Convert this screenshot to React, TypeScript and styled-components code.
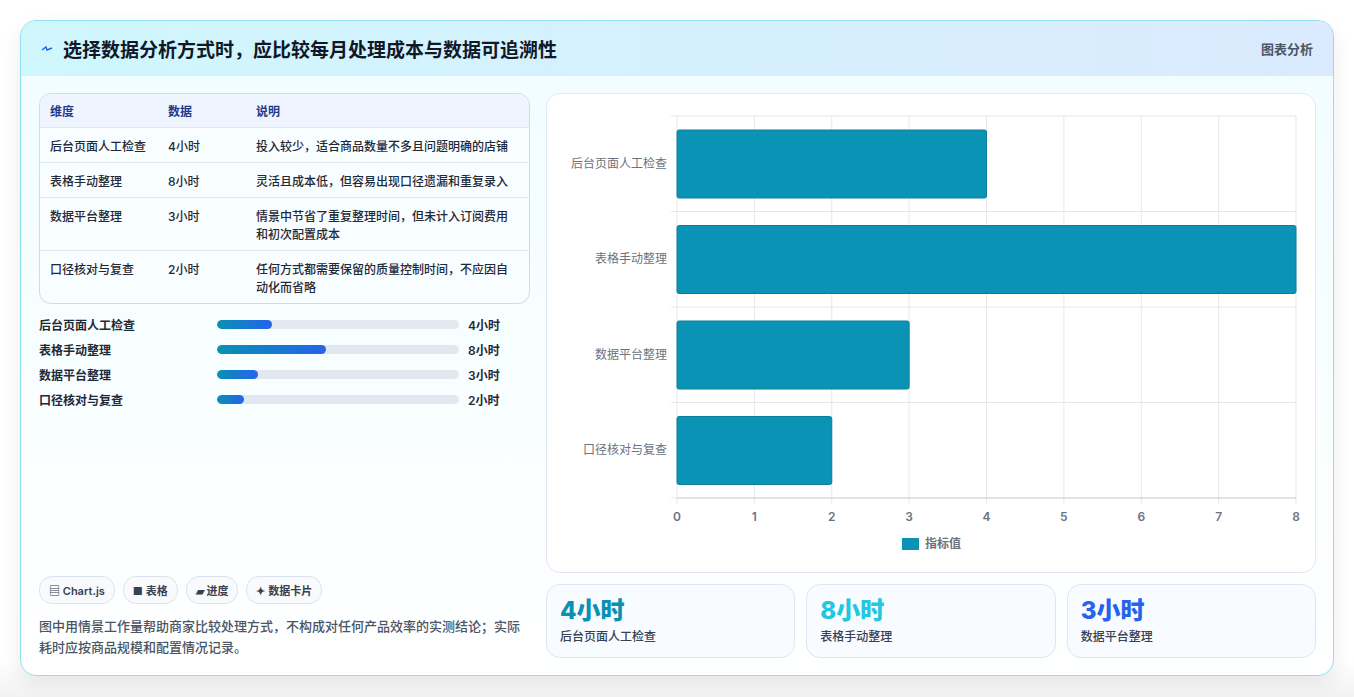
import React from 'react';
import styled, { createGlobalStyle } from 'styled-components';

const Global = createGlobalStyle`
  html, body { margin: 0; padding: 0; background: #f4f5f7; }
  body { font-family: Inter, "Noto Sans CJK SC", sans-serif; color: #1f2937; }
`;

const Page = styled.div`
  padding: 20px 20px 22px 20px;
  height: 697px;
  box-sizing: border-box;
  background: linear-gradient(#ffffff 0, #ffffff 660px, #f2f2f2 100%);
`;

const Card = styled.div`
  height: 656px;
  box-sizing: border-box;
  border: 1px solid #8fe0ea;
  border-radius: 16px;
  overflow: hidden;
  background: linear-gradient(180deg, #f0fdff 0%, #ffffff 100%);
  box-shadow: 0 8px 20px rgba(0, 0, 0, 0.08);
  display: flex;
  flex-direction: column;
`;

const Header = styled.div`
  height: 55px;
  flex: none;
  display: flex;
  align-items: center;
  justify-content: space-between;
  padding: 0 20px 0 20px;
  background: linear-gradient(90deg, #cff7fd 0%, #dbeafe 100%);
`;

const Title = styled.h1`
  margin: 0;
  font-size: 19px;
  font-weight: 700;
  color: #111827;
  display: flex;
  align-items: center;
  gap: 10px;
`;

const Tag = styled.span`
  font-size: 13px;
  color: #4b5563;
  font-weight: 600;
`;

const Body = styled.div`
  flex: 1;
  display: grid;
  grid-template-columns: 491px 1fr;
  gap: 16px;
  padding: 17px 18px 18px 18px;
  min-height: 0;
`;

const Left = styled.div`
  display: flex;
  flex-direction: column;
  min-height: 0;
`;

const Table = styled.div`
  border: 1px solid #cfdbe6;
  border-radius: 12px;
  overflow: hidden;
  background: #f8fdff;
`;

const Row = styled.div<{ $head?: boolean; $h: number }>`
  display: grid;
  grid-template-columns: 118px 88px 1fr;
  padding: 0 10px 0 10px;
  min-height: ${p => p.$h}px;
  align-items: start;
  padding-top: ${p => (p.$head ? 9 : 10)}px;
  box-sizing: border-box;
  font-size: 12px;
  line-height: 18px;
  color: ${p => (p.$head ? '#1e3a8a' : '#1f2937')};
  font-weight: ${p => (p.$head ? 600 : 500)};
  background: ${p => (p.$head ? '#eef5fe' : 'transparent')};
  & + & { border-top: 1px solid #e2e8f0; }
`;

const Bars = styled.div`
  display: flex;
  flex-direction: column;
  gap: 7px;
  padding-top: 11px;
`;

const BarRow = styled.div`
  display: grid;
  grid-template-columns: 178px 242px 1fr;
  align-items: center;
  gap: 0;
  font-size: 12px;
  font-weight: 600;
  height: 18px;
`;

const Value = styled.span`
  padding-left: 9px;
`;

const Track = styled.div`
  height: 9px;
  border-radius: 5px;
  background: #e2e8f0;
  overflow: hidden;
`;

const Fill = styled.div`
  height: 100%;
  border-radius: 5px;
  background: linear-gradient(90deg, #0891b2, #2563eb);
`;

const Spacer = styled.div`
  flex: 1;
`;

const Chips = styled.div`
  display: flex;
  gap: 8px;
`;

const Chip = styled.span`
  height: 26px;
  padding: 0 9px;
  border: 1px solid #dbe4ee;
  border-radius: 13px;
  background: #f8fafc;
  display: inline-flex;
  align-items: center;
  gap: 3px;
  font-size: 11px;
  font-weight: 600;
  color: #374151;
`;

const Note = styled.p`
  margin: 12px 0 0 0;
  font-size: 13px;
  line-height: 21px;
  color: #4b5563;
  font-weight: 500;
`;

const Right = styled.div`
  display: flex;
  flex-direction: column;
  gap: 11px;
`;

const ChartPanel = styled.div`
  height: 480px;
  box-sizing: border-box;
  border: 1px solid #e2e8f0;
  border-radius: 14px;
  background: #ffffff;
`;

const Stats = styled.div`
  display: grid;
  grid-template-columns: repeat(3, 1fr);
  gap: 11px;
`;

const Stat = styled.div`
  height: 74px;
  box-sizing: border-box;
  border: 1px solid #dbe7f1;
  border-radius: 14px;
  background: #f8fbff;
  padding: 10px 13px;
`;

const StatNum = styled.div<{ $c: string }>`
  font-size: 24px;
  font-weight: 800;
  line-height: 32px;
  color: ${p => p.$c};
`;

const StatLabel = styled.div`
  font-size: 12px;
  color: #374151;
  font-weight: 500;
`;

const rows = [
  { name: '后台页面人工检查', v: 4, desc: '投入较少，适合商品数量不多且问题明确的店铺', h: 35 },
  { name: '表格手动整理', v: 8, desc: '灵活且成本低，但容易出现口径遗漏和重复录入', h: 35 },
  { name: '数据平台整理', v: 3, desc: '情景中节省了重复整理时间，但未计入订阅费用和初次配置成本', h: 53 },
  { name: '口径核对与复查', v: 2, desc: '任何方式都需要保留的质量控制时间，不应因自动化而省略', h: 53 },
];

const Chart = () => {
  const x0 = 130, x1 = 749, y0 = 22, y1 = 404;
  const step = (x1 - x0) / 8;
  const band = (y1 - y0) / 4;
  return (
    <svg width="768" height="478" viewBox="0 0 768 478" fontFamily="Inter, 'Noto Sans CJK SC', sans-serif">
      {Array.from({ length: 9 }).map((_, i) => (
        <line key={i} x1={x0 + i * step} x2={x0 + i * step} y1={y0} y2={y1 + 6} stroke="#e5e7eb" />
      ))}
      {[0, 1, 2, 3, 4].map(i => (
        <line key={i} x1={x0 - 6} x2={x1} y1={y0 + i * band} y2={y0 + i * band} stroke="#e5e7eb" />
      ))}
      <line x1={x0} x2={x1} y1={y1} y2={y1} stroke="#cbd5e1" />
      {rows.map((r, i) => (
        <g key={r.name}>
          <rect x={x0} y={y0 + i * band + 14} width={r.v * step} height={68} fill="#0a93b5" stroke="#0c7e9c" rx="2" />
          <text x={x0 - 10} y={y0 + i * band + band / 2 + 4} textAnchor="end" fontSize="12" fill="#6b7280">{r.name}</text>
        </g>
      ))}
      {Array.from({ length: 9 }).map((_, i) => (
        <text key={i} x={x0 + i * step} y={y1 + 23} textAnchor="middle" fontSize="12" fontWeight="600" fill="#6b7280">{i}</text>
      ))}
      <rect x="355" y="444" width="17" height="12" fill="#0a93b5" />
      <text x="378" y="454" fontSize="12" fontWeight="600" fill="#6b7280">指标值</text>
    </svg>
  );
};

export default function App() {
  return (
    <Page>
      <Global />
      <Card>
        <Header>
          <Title>
            <svg width="12" height="10" viewBox="0 0 12 10"><path d="M1 6 L5 3 L6 6 L11 4" stroke="#2563eb" strokeWidth="1.4" fill="none" /></svg>
            选择数据分析方式时，应比较每月处理成本与数据可追溯性
          </Title>
          <Tag>图表分析</Tag>
        </Header>
        <Body>
          <Left>
            <Table>
              <Row $head $h={33}><span>维度</span><span>数据</span><span>说明</span></Row>
              {rows.map(r => (
                <Row key={r.name} $h={r.h}><span>{r.name}</span><span>{r.v}小时</span><span>{r.desc}</span></Row>
              ))}
            </Table>
            <Bars>
              {rows.map(r => (
                <BarRow key={r.name}>
                  <span>{r.name}</span>
                  <Track><Fill style={{ width: `${(r.v / 17.7) * 100}%` }} /></Track>
                  <Value>{r.v}小时</Value>
                </BarRow>
              ))}
            </Bars>
            <Spacer />
            <Chips>
              <Chip>▤ Chart.js</Chip>
              <Chip>■ 表格</Chip>
              <Chip>▰ 进度</Chip>
              <Chip>✦ 数据卡片</Chip>
            </Chips>
            <Note>图中用情景工作量帮助商家比较处理方式，不构成对任何产品效率的实测结论；实际耗时应按商品规模和配置情况记录。</Note>
          </Left>
          <Right>
            <ChartPanel><Chart /></ChartPanel>
            <Stats>
              <Stat><StatNum $c="#0891b2">4小时</StatNum><StatLabel>后台页面人工检查</StatLabel></Stat>
              <Stat><StatNum $c="#22c7e0">8小时</StatNum><StatLabel>表格手动整理</StatLabel></Stat>
              <Stat><StatNum $c="#2563eb">3小时</StatNum><StatLabel>数据平台整理</StatLabel></Stat>
            </Stats>
          </Right>
        </Body>
      </Card>
    </Page>
  );
}
